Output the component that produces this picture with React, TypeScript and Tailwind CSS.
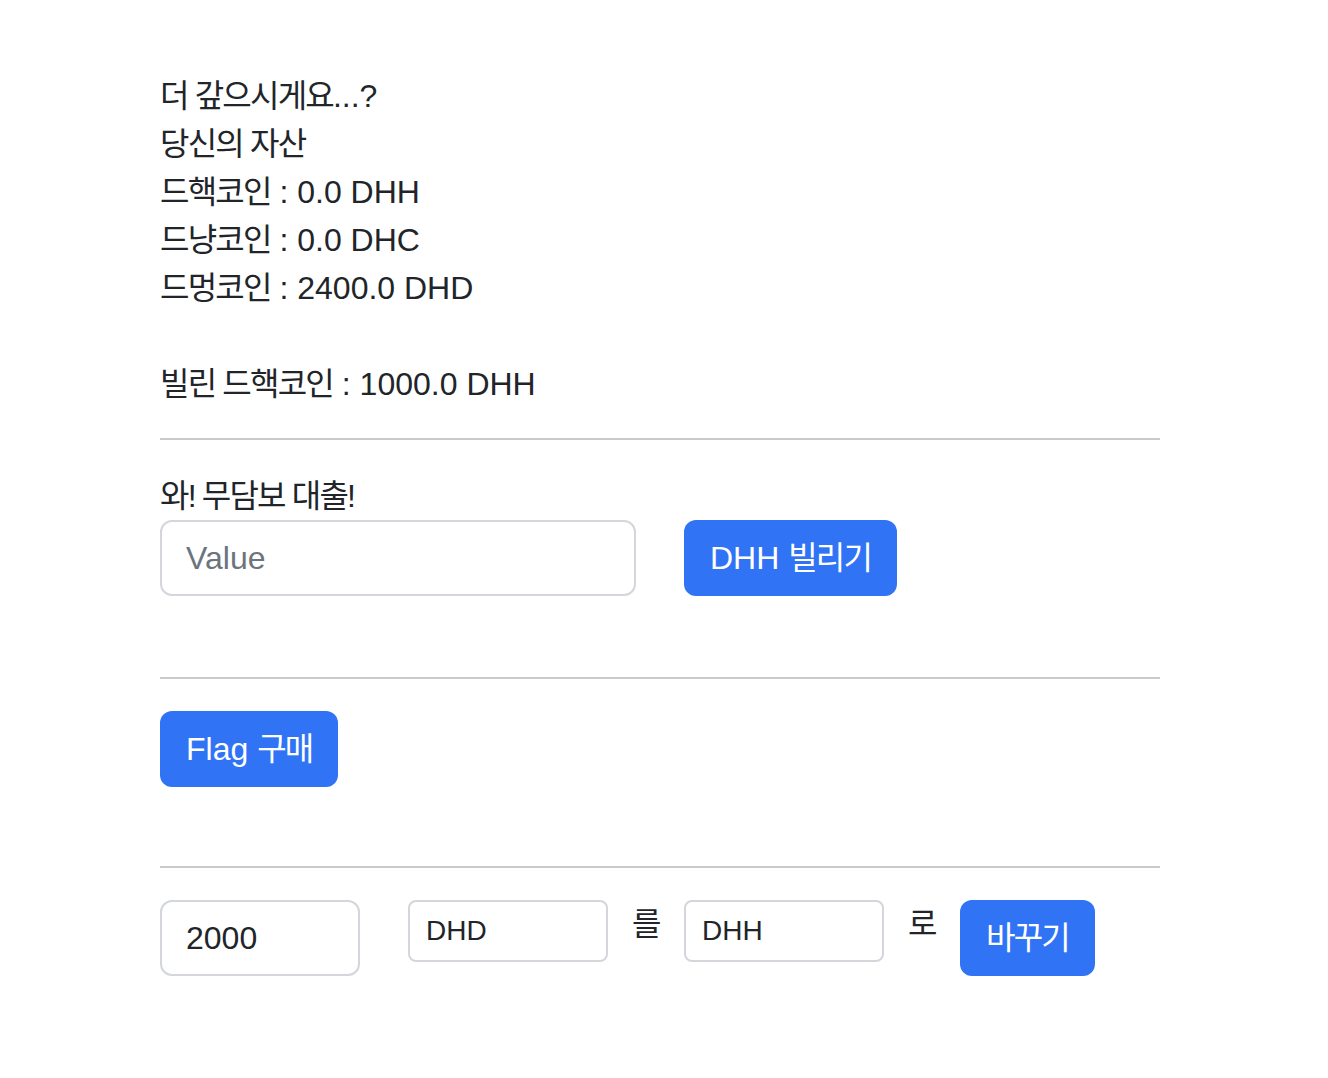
import React from "react";

// Noto CJK hangul runs a bit wider than the system face; tighten slightly
const K: React.FC<{ children: React.ReactNode }> = ({ children }) => (
  <span className="tracking-[-1.8px]">{children}</span>
);

const Rule = () => <hr className="mt-[30px] mb-8 h-0 border-0 border-t-2 border-solid border-[#c9cacb]" />;

const App: React.FC = () => {
  return (
    <div className="min-h-screen bg-white text-[#212529] font-['Liberation_Sans','Noto_Sans_CJK_KR',sans-serif] text-[32px] leading-[48px]">
      <div className="w-[1000px] ml-[160px] pt-[72px] pb-16">
        {/* Balance */}
        <div><K>더 갚으시게요</K>...?</div>
        <div><K>당신의 자산</K></div>
        <div><K>드핵코인</K> : 0.0 DHH</div>
        <div><K>드냥코인</K> : 0.0 DHC</div>
        <div><K>드멍코인</K> : 2400.0 DHD</div>
        <div className="h-12" />
        <div><K>빌린 드핵코인</K> : 1000.0 DHH</div>

        <Rule />

        {/* Loan */}
        <div><K>와! 무담보 대출!</K></div>
        <div className="flex items-start gap-[48px]">
          <input
            placeholder="Value"
            className="w-[476px] h-[76px] px-6 border-2 border-solid border-[#d3d7db] rounded-xl outline-none placeholder:text-[#6c757d]"
          />
          <button className="h-[76px] px-[26px] rounded-xl bg-[#3074f5] text-white">
            DHH <K>빌리기</K>
          </button>
        </div>
        <div className="h-[51px]" />

        <Rule />

        {/* Flag */}
        <button className="h-[76px] px-[26px] rounded-xl bg-[#3074f5] text-white">
          Flag <K>구매</K>
        </button>
        <div className="h-[49px]" />

        <Rule />

        {/* Swap */}
        <div className="flex items-start">
          <input
            defaultValue="2000"
            className="w-[200px] h-[76px] px-6 border-2 border-solid border-[#d3d7db] rounded-xl outline-none"
          />
          <input
            defaultValue="DHD"
            className="ml-[48px] w-[200px] h-[62px] px-4 text-[28px] border-2 border-solid border-[#d3d7db] rounded-lg outline-none"
          />
          <span className="mx-6 w-[28px] text-center">를</span>
          <input
            defaultValue="DHH"
            className="w-[200px] h-[62px] px-4 text-[28px] border-2 border-solid border-[#d3d7db] rounded-lg outline-none"
          />
          <span className="mx-6 w-[28px] text-center">로</span>
          <button className="h-[76px] px-[26px] rounded-xl bg-[#3074f5] text-white">
            <K>바꾸기</K>
          </button>
        </div>
      </div>
    </div>
  );
};

export default App;
